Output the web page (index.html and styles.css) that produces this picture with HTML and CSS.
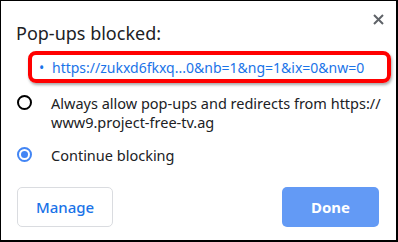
FILE: index.html
```html
<!DOCTYPE html>
<html lang="en">
  <head>
    <meta charset="UTF-8" />
    <meta name="viewport" content="width=device-width, initial-scale=1.0" />
    <title>Pop-ups blocked</title>
    <link rel="stylesheet" href="styles.css">
  </head>
  <body>
    <div class="dialog">
      <div class="header">
        <div class="title">Pop-ups blocked:</div>
        <button class="close-btn" aria-label="Close">
          <svg width="11" height="11" viewBox="0 0 11 11">
            <path d="M1 1L10 10M10 1L1 10" stroke="#5f6368" stroke-width="2" fill="none" />
          </svg>
        </button>
      </div>

      <div class="highlight">
        <a class="popup-link" href="#"><span class="bullet">&bull;</span>https://zukxd6fkxq...0&amp;nb=1&amp;ng=1&amp;ix=0&amp;nw=0</a>
      </div>

      <div class="options">
        <label class="option">
          <span class="radio"></span>
          <span class="option-text">Always allow pop-ups and redirects from https://<br>www9.project-free-tv.ag</span>
        </label>
        <label class="option">
          <span class="radio checked"></span>
          <span class="option-text">Continue blocking</span>
        </label>
      </div>

      <div class="actions">
        <button class="btn btn-manage">Manage</button>
        <button class="btn btn-done">Done</button>
      </div>
    </div>
  </body>
</html>
```

FILE: styles.css
```css
body {
  margin: 0;
  background-color: #ffffff;
  font-family: "Noto Sans", "Open Sans", sans-serif;
  color: #202124;
}

.dialog {
  width: 398px;
  height: 242px;
  box-sizing: border-box;
  border-style: solid;
  border-color: #000000;
  border-width: 1px 2px 2px 1px;
  display: flex;
  flex-direction: column;
}

.header {
  display: flex;
  justify-content: space-between;
  align-items: flex-start;
  padding: 13px 12px 0 15px;
}

.title {
  font-size: 18px;
  line-height: 22px;
  margin-top: 8px;
}

.close-btn {
  padding: 0;
  border: none;
  background: transparent;
  width: 11px;
  height: 11px;
  cursor: pointer;
}

.close-btn svg {
  display: block;
}

.highlight {
  margin: 7px 5px 0 27px;
  height: 32px;
  box-sizing: border-box;
  border: 4px solid #ff0000;
  border-radius: 8px;
  box-shadow: 1px 2px 3px rgba(0, 0, 0, 0.35);
  display: flex;
  align-items: center;
  padding-left: 7px;
}

.popup-link {
  color: #1a73e8;
  text-decoration: none;
  font-size: 14px;
  white-space: nowrap;
}

.bullet {
  display: inline-block;
  width: 13px;
}

.options {
  display: flex;
  flex-direction: column;
  gap: 14px;
  padding: 11px 0 0 16px;
}

.option {
  display: flex;
  align-items: flex-start;
  gap: 19px;
  font-size: 14.5px;
  line-height: 19px;
}

.radio {
  width: 15px;
  height: 15px;
  box-sizing: border-box;
  border: 2px solid #000000;
  border-radius: 50%;
  margin-top: 1px;
  flex-shrink: 0;
  position: relative;
}

.radio.checked {
  border-color: #4285f4;
}

.radio.checked::after {
  content: "";
  position: absolute;
  left: 2px;
  top: 2px;
  width: 7px;
  height: 7px;
  border-radius: 50%;
  background-color: #4285f4;
}

.actions {
  margin-top: auto;
  display: flex;
  justify-content: space-between;
  padding: 0 17px 13px 16px;
}

.btn {
  font-family: inherit;
  font-size: 15px;
  height: 40px;
  border-radius: 5px;
  cursor: pointer;
}

.btn-manage {
  width: 96px;
  background-color: #ffffff;
  border: 1px solid #dadce0;
  color: #1a73e8;
  font-weight: 500;
}

.btn-done {
  width: 97px;
  background-color: #639af5;
  border: none;
  color: #ffffff;
  font-weight: 700;
}
```
